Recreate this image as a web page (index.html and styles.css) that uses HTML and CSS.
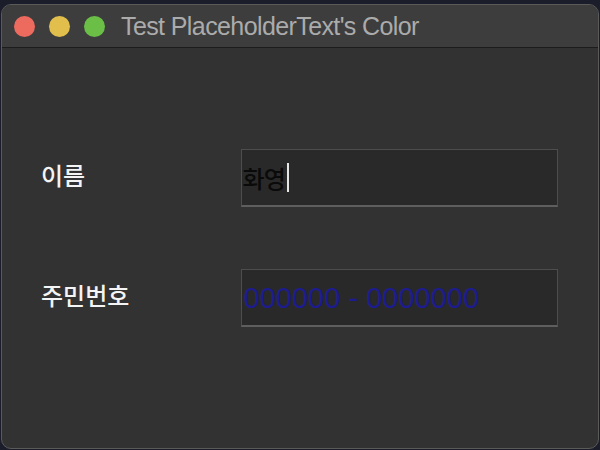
FILE: index.html
```html
<!DOCTYPE html>
<html>
	<head>
		<meta charset="UTF-8">
		<title>Test PlaceholderText's Color</title>
		<link rel="stylesheet" href="styles.css">
	</head>
	<body>
		<div class="window">
			<div class="titlebar">
				<span class="light red"></span>
				<span class="light yellow"></span>
				<span class="light green"></span>
				<span class="title">Test PlaceholderText's Color</span>
			</div>
			<div class="content">
				<div class="row">
					<span class="label">이름</span>
					<div class="field"><span class="value">화영</span><span class="caret"></span></div>
				</div>
				<div class="row">
					<span class="label">주민번호</span>
					<div class="field"><span class="placeholder">000000 - 0000000</span></div>
				</div>
			</div>
		</div>
	</body>
</html>
```

FILE: styles.css
```css
*{
	padding:0;
	margin:0;
	box-sizing:border-box;
}
html,body{
	width:600px;
	height:450px;
	overflow:hidden;
}
body{
	background:#1b1d2a;
	padding:4px 1px 1px 1px;
	font-family:"Noto Sans CJK KR","Liberation Sans",sans-serif;
}
.window{
	height:445px;
	background:#323232;
	border:1px solid #5a5a5a;
	border-radius:10px;
	overflow:hidden;
	display:flex;
	flex-direction:column;
}
.titlebar{
	height:43px;
	flex-shrink:0;
	background:#3d3d3d;
	border-bottom:1px solid #1c1c1c;
	display:flex;
	align-items:center;
	padding-left:12px;
}
.light{
	width:21px;
	height:21px;
	border-radius:50%;
	margin-right:14px;
}
.red{
	background:#ed6a5e;
}
.yellow{
	background:#e2bf4c;
}
.green{
	background:#6bbf47;
}
.title{
	margin-left:2px;
	font-family:"Liberation Sans",sans-serif;
	font-size:25px;
	letter-spacing:-0.6px;
	color:#ababab;
	line-height:43px;
	padding-top:1px;
}
.content{
	padding:101px 40px 0 39px;
	display:flex;
	flex-direction:column;
	gap:62px;
}
.row{
	display:flex;
	align-items:center;
}
.label{
	width:200px;
	font-size:24px;
	font-weight:500;
	line-height:26px;
	color:#f4f4f4;
	margin-top:-6px;
}
.field{
	width:318px;
	height:58px;
	background:#292929;
	border:1px solid #4d4d4d;
	border-bottom:2px solid #5e5e5e;
	display:flex;
	align-items:center;
	padding-left:1px;
}
.value{
	font-size:24px;
	font-weight:500;
	line-height:30px;
	color:#0a0a0a;
	letter-spacing:-1px;
}
.caret{
	width:2px;
	height:29px;
	background:#e6e6e6;
	margin-left:2px;
}
.placeholder{
	font-family:"Liberation Sans",sans-serif;
	font-size:29px;
	line-height:30px;
	color:#1c1c90;
	padding-left:1px;
	margin-top:1px;
}
```
